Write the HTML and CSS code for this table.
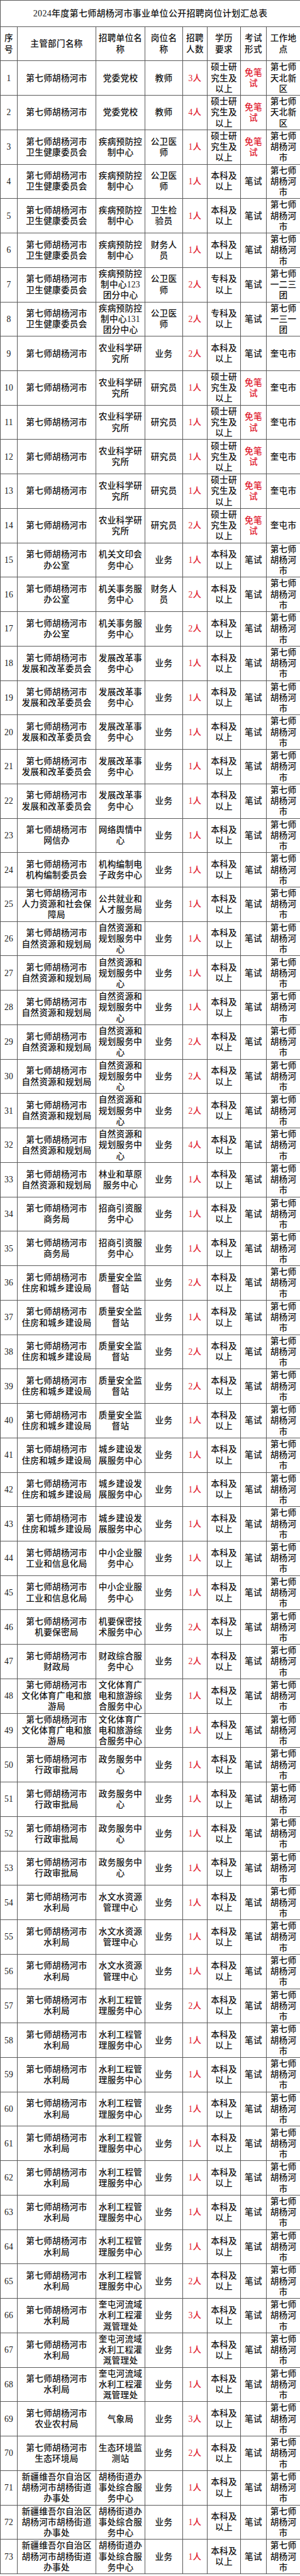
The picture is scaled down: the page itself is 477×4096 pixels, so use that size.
FILE: index.html
```html
<!DOCTYPE html>
<html lang="zh-CN">
<head>
<meta charset="utf-8">
<title>2024年度第七师胡杨河市事业单位公开招聘岗位计划汇总表</title>
<link rel="stylesheet" href="styles.css">
</head>
<body>
<table class="sheet">
<colgroup>
<col class="c1"><col class="c2"><col class="c3"><col class="c4"><col class="c5"><col class="c6"><col class="c7"><col class="c8">
</colgroup>
<thead>
<tr class="title-row"><th colspan="8">2024年度第七师胡杨河市事业单位公开招聘岗位计划汇总表</th></tr>
<tr class="head-row"><th>序<br>号</th><th>主管部门名称</th><th>招聘单位名<br>称</th><th>岗位名<br>称</th><th>招聘<br>人数</th><th>学历<br>要求</th><th>考试<br>形式</th><th>工作地<br>点</th></tr>
</thead>
<tbody>
<tr><td>1</td><td>第七师胡杨河市</td><td>党委党校</td><td>教师</td><td class="red">3人</td><td>硕士研<br>究生及<br>以上</td><td class="red">免笔<br>试</td><td>第七师<br>天北新<br>区</td></tr>
<tr><td>2</td><td>第七师胡杨河市</td><td>党委党校</td><td>教师</td><td class="red">4人</td><td>硕士研<br>究生及<br>以上</td><td class="red">免笔<br>试</td><td>第七师<br>天北新<br>区</td></tr>
<tr><td>3</td><td>第七师胡杨河市<br>卫生健康委员会</td><td>疾病预防控<br>制中心</td><td>公卫医<br>师</td><td class="red">1人</td><td>硕士研<br>究生及<br>以上</td><td class="red">免笔<br>试</td><td>第七师<br>胡杨河<br>市</td></tr>
<tr><td>4</td><td>第七师胡杨河市<br>卫生健康委员会</td><td>疾病预防控<br>制中心</td><td>公卫医<br>师</td><td class="red">1人</td><td>本科及<br>以上</td><td>笔试</td><td>第七师<br>胡杨河<br>市</td></tr>
<tr><td>5</td><td>第七师胡杨河市<br>卫生健康委员会</td><td>疾病预防控<br>制中心</td><td>卫生检<br>验员</td><td class="red">1人</td><td>本科及<br>以上</td><td>笔试</td><td>第七师<br>胡杨河<br>市</td></tr>
<tr><td>6</td><td>第七师胡杨河市<br>卫生健康委员会</td><td>疾病预防控<br>制中心</td><td>财务人<br>员</td><td class="red">1人</td><td>本科及<br>以上</td><td>笔试</td><td>第七师<br>胡杨河<br>市</td></tr>
<tr><td>7</td><td>第七师胡杨河市<br>卫生健康委员会</td><td>疾病预防控<br>制中心123<br>团分中心</td><td>公卫医<br>师</td><td class="red">2人</td><td>专科及<br>以上</td><td>笔试</td><td>第七师<br>一二三<br>团</td></tr>
<tr><td>8</td><td>第七师胡杨河市<br>卫生健康委员会</td><td>疾病预防控<br>制中心131<br>团分中心</td><td>公卫医<br>师</td><td class="red">2人</td><td>专科及<br>以上</td><td>笔试</td><td>第七师<br>一三一<br>团</td></tr>
<tr><td>9</td><td>第七师胡杨河市</td><td>农业科学研<br>究所</td><td>业务</td><td class="red">2人</td><td>本科及<br>以上</td><td>笔试</td><td>奎屯市</td></tr>
<tr><td>10</td><td>第七师胡杨河市</td><td>农业科学研<br>究所</td><td>研究员</td><td class="red">1人</td><td>硕士研<br>究生及<br>以上</td><td class="red">免笔<br>试</td><td>奎屯市</td></tr>
<tr><td>11</td><td>第七师胡杨河市</td><td>农业科学研<br>究所</td><td>研究员</td><td class="red">1人</td><td>硕士研<br>究生及<br>以上</td><td class="red">免笔<br>试</td><td>奎屯市</td></tr>
<tr><td>12</td><td>第七师胡杨河市</td><td>农业科学研<br>究所</td><td>研究员</td><td class="red">1人</td><td>硕士研<br>究生及<br>以上</td><td class="red">免笔<br>试</td><td>奎屯市</td></tr>
<tr><td>13</td><td>第七师胡杨河市</td><td>农业科学研<br>究所</td><td>研究员</td><td class="red">1人</td><td>硕士研<br>究生及<br>以上</td><td class="red">免笔<br>试</td><td>奎屯市</td></tr>
<tr><td>14</td><td>第七师胡杨河市</td><td>农业科学研<br>究所</td><td>研究员</td><td class="red">2人</td><td>硕士研<br>究生及<br>以上</td><td class="red">免笔<br>试</td><td>奎屯市</td></tr>
<tr><td>15</td><td>第七师胡杨河市<br>办公室</td><td>机关文印会<br>务中心</td><td>业务</td><td class="red">1人</td><td>本科及<br>以上</td><td>笔试</td><td>第七师<br>胡杨河<br>市</td></tr>
<tr><td>16</td><td>第七师胡杨河市<br>办公室</td><td>机关事务服<br>务中心</td><td>财务人<br>员</td><td class="red">2人</td><td>本科及<br>以上</td><td>笔试</td><td>第七师<br>胡杨河<br>市</td></tr>
<tr><td>17</td><td>第七师胡杨河市<br>办公室</td><td>机关事务服<br>务中心</td><td>业务</td><td class="red">2人</td><td>本科及<br>以上</td><td>笔试</td><td>第七师<br>胡杨河<br>市</td></tr>
<tr><td>18</td><td>第七师胡杨河市<br>发展和改革委员会</td><td>发展改革事<br>务中心</td><td>业务</td><td class="red">1人</td><td>本科及<br>以上</td><td>笔试</td><td>第七师<br>胡杨河<br>市</td></tr>
<tr><td>19</td><td>第七师胡杨河市<br>发展和改革委员会</td><td>发展改革事<br>务中心</td><td>业务</td><td class="red">1人</td><td>本科及<br>以上</td><td>笔试</td><td>第七师<br>胡杨河<br>市</td></tr>
<tr><td>20</td><td>第七师胡杨河市<br>发展和改革委员会</td><td>发展改革事<br>务中心</td><td>业务</td><td class="red">1人</td><td>本科及<br>以上</td><td>笔试</td><td>第七师<br>胡杨河<br>市</td></tr>
<tr><td>21</td><td>第七师胡杨河市<br>发展和改革委员会</td><td>发展改革事<br>务中心</td><td>业务</td><td class="red">1人</td><td>本科及<br>以上</td><td>笔试</td><td>第七师<br>胡杨河<br>市</td></tr>
<tr><td>22</td><td>第七师胡杨河市<br>发展和改革委员会</td><td>发展改革事<br>务中心</td><td>业务</td><td class="red">1人</td><td>本科及<br>以上</td><td>笔试</td><td>第七师<br>胡杨河<br>市</td></tr>
<tr><td>23</td><td>第七师胡杨河市<br>网信办</td><td>网络舆情中<br>心</td><td>业务</td><td class="red">1人</td><td>本科及<br>以上</td><td>笔试</td><td>第七师<br>胡杨河<br>市</td></tr>
<tr><td>24</td><td>第七师胡杨河市<br>机构编制委员会</td><td>机构编制电<br>子政务中心</td><td>业务</td><td class="red">1人</td><td>本科及<br>以上</td><td>笔试</td><td>第七师<br>胡杨河<br>市</td></tr>
<tr><td>25</td><td>第七师胡杨河市<br>人力资源和社会保<br>障局</td><td>公共就业和<br>人才服务局</td><td>业务</td><td class="red">1人</td><td>本科及<br>以上</td><td>笔试</td><td>第七师<br>胡杨河<br>市</td></tr>
<tr><td>26</td><td>第七师胡杨河市<br>自然资源和规划局</td><td>自然资源和<br>规划服务中<br>心</td><td>业务</td><td class="red">1人</td><td>本科及<br>以上</td><td>笔试</td><td>第七师<br>胡杨河<br>市</td></tr>
<tr><td>27</td><td>第七师胡杨河市<br>自然资源和规划局</td><td>自然资源和<br>规划服务中<br>心</td><td>业务</td><td class="red">1人</td><td>本科及<br>以上</td><td>笔试</td><td>第七师<br>胡杨河<br>市</td></tr>
<tr><td>28</td><td>第七师胡杨河市<br>自然资源和规划局</td><td>自然资源和<br>规划服务中<br>心</td><td>业务</td><td class="red">1人</td><td>本科及<br>以上</td><td>笔试</td><td>第七师<br>胡杨河<br>市</td></tr>
<tr><td>29</td><td>第七师胡杨河市<br>自然资源和规划局</td><td>自然资源和<br>规划服务中<br>心</td><td>业务</td><td class="red">2人</td><td>本科及<br>以上</td><td>笔试</td><td>第七师<br>胡杨河<br>市</td></tr>
<tr><td>30</td><td>第七师胡杨河市<br>自然资源和规划局</td><td>自然资源和<br>规划服务中<br>心</td><td>业务</td><td class="red">2人</td><td>本科及<br>以上</td><td>笔试</td><td>第七师<br>胡杨河<br>市</td></tr>
<tr><td>31</td><td>第七师胡杨河市<br>自然资源和规划局</td><td>自然资源和<br>规划服务中<br>心</td><td>业务</td><td class="red">2人</td><td>本科及<br>以上</td><td>笔试</td><td>第七师<br>胡杨河<br>市</td></tr>
<tr><td>32</td><td>第七师胡杨河市<br>自然资源和规划局</td><td>自然资源和<br>规划服务中<br>心</td><td>业务</td><td class="red">4人</td><td>本科及<br>以上</td><td>笔试</td><td>第七师<br>胡杨河<br>市</td></tr>
<tr><td>33</td><td>第七师胡杨河市<br>自然资源和规划局</td><td>林业和草原<br>服务中心</td><td>业务</td><td class="red">1人</td><td>本科及<br>以上</td><td>笔试</td><td>第七师<br>胡杨河<br>市</td></tr>
<tr><td>34</td><td>第七师胡杨河市<br>商务局</td><td>招商引资服<br>务中心</td><td>业务</td><td class="red">1人</td><td>本科及<br>以上</td><td>笔试</td><td>第七师<br>胡杨河<br>市</td></tr>
<tr><td>35</td><td>第七师胡杨河市<br>商务局</td><td>招商引资服<br>务中心</td><td>业务</td><td class="red">1人</td><td>本科及<br>以上</td><td>笔试</td><td>第七师<br>胡杨河<br>市</td></tr>
<tr><td>36</td><td>第七师胡杨河市<br>住房和城乡建设局</td><td>质量安全监<br>督站</td><td>业务</td><td class="red">2人</td><td>本科及<br>以上</td><td>笔试</td><td>第七师<br>胡杨河<br>市</td></tr>
<tr><td>37</td><td>第七师胡杨河市<br>住房和城乡建设局</td><td>质量安全监<br>督站</td><td>业务</td><td class="red">1人</td><td>本科及<br>以上</td><td>笔试</td><td>第七师<br>胡杨河<br>市</td></tr>
<tr><td>38</td><td>第七师胡杨河市<br>住房和城乡建设局</td><td>质量安全监<br>督站</td><td>业务</td><td class="red">2人</td><td>本科及<br>以上</td><td>笔试</td><td>第七师<br>胡杨河<br>市</td></tr>
<tr><td>39</td><td>第七师胡杨河市<br>住房和城乡建设局</td><td>质量安全监<br>督站</td><td>业务</td><td class="red">2人</td><td>本科及<br>以上</td><td>笔试</td><td>第七师<br>胡杨河<br>市</td></tr>
<tr><td>40</td><td>第七师胡杨河市<br>住房和城乡建设局</td><td>质量安全监<br>督站</td><td>业务</td><td class="red">1人</td><td>本科及<br>以上</td><td>笔试</td><td>第七师<br>胡杨河<br>市</td></tr>
<tr><td>41</td><td>第七师胡杨河市<br>住房和城乡建设局</td><td>城乡建设发<br>展服务中心</td><td>业务</td><td class="red">1人</td><td>本科及<br>以上</td><td>笔试</td><td>第七师<br>胡杨河<br>市</td></tr>
<tr><td>42</td><td>第七师胡杨河市<br>住房和城乡建设局</td><td>城乡建设发<br>展服务中心</td><td>业务</td><td class="red">1人</td><td>本科及<br>以上</td><td>笔试</td><td>第七师<br>胡杨河<br>市</td></tr>
<tr><td>43</td><td>第七师胡杨河市<br>住房和城乡建设局</td><td>城乡建设发<br>展服务中心</td><td>业务</td><td class="red">1人</td><td>本科及<br>以上</td><td>笔试</td><td>第七师<br>胡杨河<br>市</td></tr>
<tr><td>44</td><td>第七师胡杨河市<br>工业和信息化局</td><td>中小企业服<br>务中心</td><td>业务</td><td class="red">1人</td><td>本科及<br>以上</td><td>笔试</td><td>第七师<br>胡杨河<br>市</td></tr>
<tr><td>45</td><td>第七师胡杨河市<br>工业和信息化局</td><td>中小企业服<br>务中心</td><td>业务</td><td class="red">1人</td><td>本科及<br>以上</td><td>笔试</td><td>第七师<br>胡杨河<br>市</td></tr>
<tr><td>46</td><td>第七师胡杨河市<br>机要保密局</td><td>机要保密技<br>术服务中心</td><td>业务</td><td class="red">2人</td><td>本科及<br>以上</td><td>笔试</td><td>第七师<br>胡杨河<br>市</td></tr>
<tr><td>47</td><td>第七师胡杨河市<br>财政局</td><td>财政综合服<br>务中心</td><td>业务</td><td class="red">2人</td><td>本科及<br>以上</td><td>笔试</td><td>第七师<br>胡杨河<br>市</td></tr>
<tr><td>48</td><td>第七师胡杨河市<br>文化体育广电和旅<br>游局</td><td>文化体育广<br>电和旅游综<br>合服务中心</td><td>业务</td><td class="red">1人</td><td>本科及<br>以上</td><td>笔试</td><td>第七师<br>胡杨河<br>市</td></tr>
<tr><td>49</td><td>第七师胡杨河市<br>文化体育广电和旅<br>游局</td><td>文化体育广<br>电和旅游综<br>合服务中心</td><td>业务</td><td class="red">1人</td><td>本科及<br>以上</td><td>笔试</td><td>第七师<br>胡杨河<br>市</td></tr>
<tr><td>50</td><td>第七师胡杨河市<br>行政审批局</td><td>政务服务中<br>心</td><td>业务</td><td class="red">1人</td><td>本科及<br>以上</td><td>笔试</td><td>第七师<br>胡杨河<br>市</td></tr>
<tr><td>51</td><td>第七师胡杨河市<br>行政审批局</td><td>政务服务中<br>心</td><td>业务</td><td class="red">1人</td><td>本科及<br>以上</td><td>笔试</td><td>第七师<br>胡杨河<br>市</td></tr>
<tr><td>52</td><td>第七师胡杨河市<br>行政审批局</td><td>政务服务中<br>心</td><td>业务</td><td class="red">1人</td><td>本科及<br>以上</td><td>笔试</td><td>第七师<br>胡杨河<br>市</td></tr>
<tr><td>53</td><td>第七师胡杨河市<br>行政审批局</td><td>政务服务中<br>心</td><td>业务</td><td class="red">1人</td><td>本科及<br>以上</td><td>笔试</td><td>第七师<br>胡杨河<br>市</td></tr>
<tr><td>54</td><td>第七师胡杨河市<br>水利局</td><td>水文水资源<br>管理中心</td><td>业务</td><td class="red">1人</td><td>本科及<br>以上</td><td>笔试</td><td>第七师<br>胡杨河<br>市</td></tr>
<tr><td>55</td><td>第七师胡杨河市<br>水利局</td><td>水文水资源<br>管理中心</td><td>业务</td><td class="red">1人</td><td>本科及<br>以上</td><td>笔试</td><td>第七师<br>胡杨河<br>市</td></tr>
<tr><td>56</td><td>第七师胡杨河市<br>水利局</td><td>水文水资源<br>管理中心</td><td>业务</td><td class="red">1人</td><td>本科及<br>以上</td><td>笔试</td><td>第七师<br>胡杨河<br>市</td></tr>
<tr><td>57</td><td>第七师胡杨河市<br>水利局</td><td>水利工程管<br>理服务中心</td><td>业务</td><td class="red">2人</td><td>本科及<br>以上</td><td>笔试</td><td>第七师<br>胡杨河<br>市</td></tr>
<tr><td>58</td><td>第七师胡杨河市<br>水利局</td><td>水利工程管<br>理服务中心</td><td>业务</td><td class="red">1人</td><td>本科及<br>以上</td><td>笔试</td><td>第七师<br>胡杨河<br>市</td></tr>
<tr><td>59</td><td>第七师胡杨河市<br>水利局</td><td>水利工程管<br>理服务中心</td><td>业务</td><td class="red">1人</td><td>本科及<br>以上</td><td>笔试</td><td>第七师<br>胡杨河<br>市</td></tr>
<tr><td>60</td><td>第七师胡杨河市<br>水利局</td><td>水利工程管<br>理服务中心</td><td>业务</td><td class="red">1人</td><td>本科及<br>以上</td><td>笔试</td><td>第七师<br>胡杨河<br>市</td></tr>
<tr><td>61</td><td>第七师胡杨河市<br>水利局</td><td>水利工程管<br>理服务中心</td><td>业务</td><td class="red">1人</td><td>本科及<br>以上</td><td>笔试</td><td>第七师<br>胡杨河<br>市</td></tr>
<tr><td>62</td><td>第七师胡杨河市<br>水利局</td><td>水利工程管<br>理服务中心</td><td>业务</td><td class="red">1人</td><td>本科及<br>以上</td><td>笔试</td><td>第七师<br>胡杨河<br>市</td></tr>
<tr><td>63</td><td>第七师胡杨河市<br>水利局</td><td>水利工程管<br>理服务中心</td><td>业务</td><td class="red">1人</td><td>本科及<br>以上</td><td>笔试</td><td>第七师<br>胡杨河<br>市</td></tr>
<tr><td>64</td><td>第七师胡杨河市<br>水利局</td><td>水利工程管<br>理服务中心</td><td>业务</td><td class="red">1人</td><td>本科及<br>以上</td><td>笔试</td><td>第七师<br>胡杨河<br>市</td></tr>
<tr><td>65</td><td>第七师胡杨河市<br>水利局</td><td>水利工程管<br>理服务中心</td><td>业务</td><td class="red">2人</td><td>本科及<br>以上</td><td>笔试</td><td>第七师<br>胡杨河<br>市</td></tr>
<tr><td>66</td><td>第七师胡杨河市<br>水利局</td><td>奎屯河流域<br>水利工程灌<br>溉管理处</td><td>业务</td><td class="red">3人</td><td>本科及<br>以上</td><td>笔试</td><td>第七师<br>胡杨河<br>市</td></tr>
<tr><td>67</td><td>第七师胡杨河市<br>水利局</td><td>奎屯河流域<br>水利工程灌<br>溉管理处</td><td>业务</td><td class="red">1人</td><td>本科及<br>以上</td><td>笔试</td><td>第七师<br>胡杨河<br>市</td></tr>
<tr><td>68</td><td>第七师胡杨河市<br>水利局</td><td>奎屯河流域<br>水利工程灌<br>溉管理处</td><td>业务</td><td class="red">1人</td><td>本科及<br>以上</td><td>笔试</td><td>第七师<br>胡杨河<br>市</td></tr>
<tr><td>69</td><td>第七师胡杨河市<br>农业农村局</td><td>气象局</td><td>业务</td><td class="red">3人</td><td>本科及<br>以上</td><td>笔试</td><td>第七师<br>胡杨河<br>市</td></tr>
<tr><td>70</td><td>第七师胡杨河市<br>生态环境局</td><td>生态环境监<br>测站</td><td>业务</td><td class="red">2人</td><td>本科及<br>以上</td><td>笔试</td><td>第七师<br>胡杨河<br>市</td></tr>
<tr><td>71</td><td>新疆维吾尔自治区<br>胡杨河市胡杨街道<br>办事处</td><td>胡杨街道办<br>事处综合服<br>务中心</td><td>业务</td><td class="red">1人</td><td>本科及<br>以上</td><td>笔试</td><td>第七师<br>胡杨河<br>市</td></tr>
<tr><td>72</td><td>新疆维吾尔自治区<br>胡杨河市胡杨街道<br>办事处</td><td>胡杨街道办<br>事处综合服<br>务中心</td><td>业务</td><td class="red">1人</td><td>本科及<br>以上</td><td>笔试</td><td>第七师<br>胡杨河<br>市</td></tr>
<tr><td>73</td><td>新疆维吾尔自治区<br>胡杨河市胡杨街道<br>办事处</td><td>胡杨街道办<br>事处综合服<br>务中心</td><td>业务</td><td class="red">1人</td><td>本科及<br>以上</td><td>笔试</td><td>第七师<br>胡杨河<br>市</td></tr>
</tbody>
</table>
</body>
</html>
```
FILE: styles.css
```css
html, body {
  margin: 0;
  padding: 0;
  background: #ffffff;
}

.sheet {
  width: 477px;
  border-collapse: collapse;
  table-layout: fixed;
  font-family: "Liberation Serif", "Noto Sans CJK SC", serif;
  font-size: 13.6px;
  line-height: 17.2px;
  letter-spacing: 0.3px;
  color: #141414;
  font-weight: 500;
}

.c1 { width: 27px; }
.c2 { width: 125px; }
.c3 { width: 78px; }
.c4 { width: 60px; }
.c5 { width: 39px; }
.c6 { width: 53px; }
.c7 { width: 41px; }
.c8 { width: 54px; }

.sheet th,
.sheet td {
  border: 1px solid #5a5a5a;
  padding: 0;
  text-align: center;
  vertical-align: middle;
  white-space: nowrap;
  overflow: hidden;
  font-weight: 500;
}

.title-row th {
  height: 41px;
  font-size: 14px;
}

.head-row th {
  height: 53.4px;
}

.sheet tbody td {
  height: 53.74px;
}

.sheet .red {
  color: #e0182c;
}
```
